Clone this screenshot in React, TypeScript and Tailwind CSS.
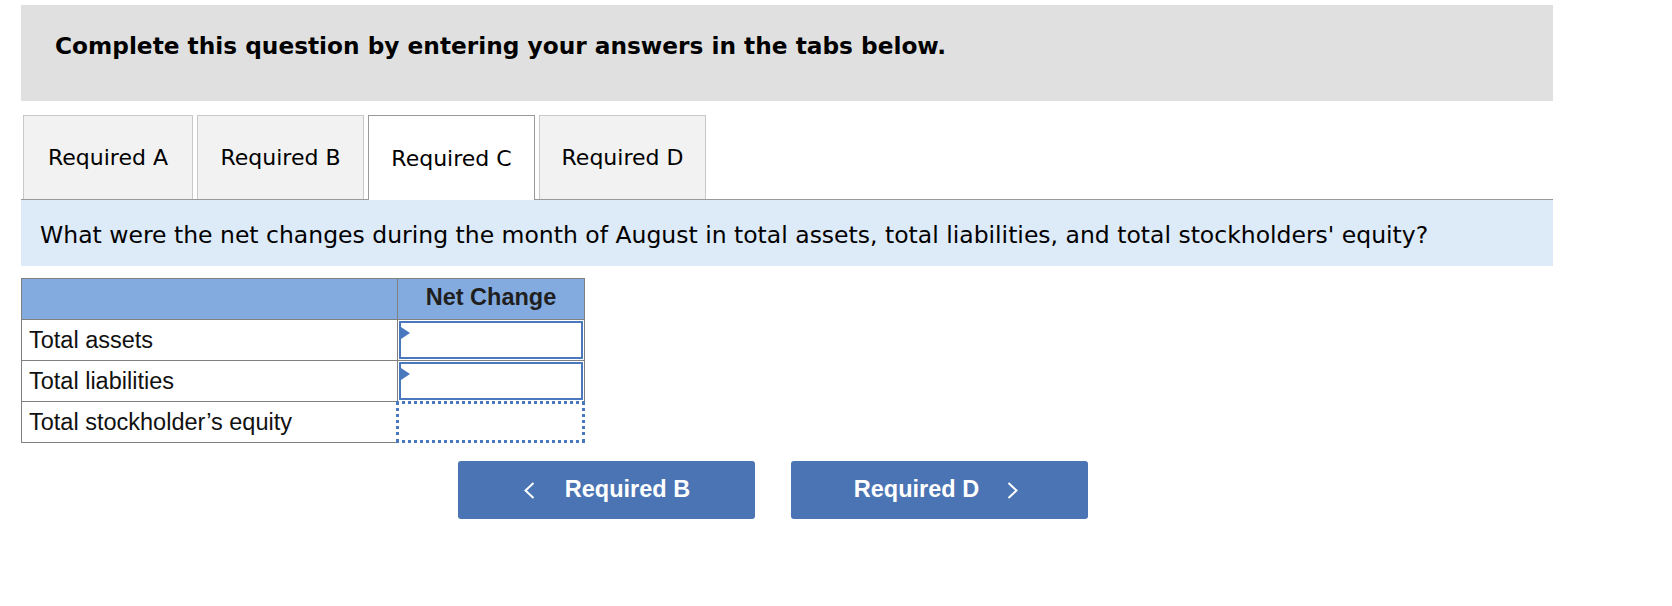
import React from 'react';

const tabs = ['Required A', 'Required B', 'Required C', 'Required D'];
const rows = ['Total assets', 'Total liabilities', 'Total stockholder’s equity'];

function Flag() {
  return (
    <svg className="absolute left-0 top-[4px]" width="9" height="12" viewBox="0 0 9 12">
      <polygon points="0,0 9,6 0,12" fill="#4a78bf" />
    </svg>
  );
}

export default function App() {
  const active = 2;
  return (
    <div className="w-[1672px] h-[606px] bg-white pl-[21px] pt-[5px] font-['DejaVu_Sans',Verdana,sans-serif] text-black">
      <div className="w-[1532px]">
        <div className="h-[96px] bg-[#e0e0e0] flex items-center pl-[34px] pb-[14px]">
          <h1 className="text-[23.25px] font-bold">Complete this question by entering your answers in the tabs below.</h1>
        </div>

        <div className="mt-[14px] flex gap-[4px] pl-[2px] border-b border-[#999]">
          {tabs.map((t, i) => (
            <div
              key={t}
              className={
                (i === 0 ? 'w-[170px] ' : 'w-[167px] ') +
                (i === active
                  ? 'h-[85px] -mb-px bg-white border border-b-0 border-[#999] flex items-center justify-center text-[22px]'
                  : 'h-[84px] bg-[#f2f2f2] border border-b-0 border-[#c8c8c8] flex items-center justify-center text-[22px]')
              }
            >
              {t}
            </div>
          ))}
        </div>

        <div className="h-[66px] bg-[#ddeaf7] flex items-center pl-[19px] pt-[5px]">
          <p className="text-[23.5px]">
            What were the net changes during the month of August in total assets, total liabilities, and total stockholders' equity?
          </p>
        </div>

        <table className="mt-[12px] border-collapse font-['Liberation_Sans',Arial,sans-serif] text-[23.5px]">
          <thead>
            <tr className="h-[41px] bg-[#84abdf]">
              <th className="w-[376px] border border-[#808080]" />
              <th className="w-[187px] border border-[#808080] font-bold text-[#1f1f1f] pb-[2px]">Net Change</th>
            </tr>
          </thead>
          <tbody>
            {rows.map((r, i) => (
              <tr key={r} className="h-[41px]">
                <td className="border border-[#808080] pl-[7px] pt-[1px] text-[#111]">{r}</td>
                <td className="relative border border-[#808080] p-0">
                  {i < 2 ? (
                    <div className="absolute inset-[1px] border-2 border-[#4a78bf] bg-white">
                      <Flag />
                    </div>
                  ) : (
                    <div className="absolute -left-[2px] -top-[1px] -right-[1px] -bottom-[1px] border-[3px] border-dotted border-[#4a78bf] bg-white" />
                  )}
                </td>
              </tr>
            ))}
          </tbody>
        </table>

        <div className="mt-[18px] flex gap-[36px] pl-[437px] font-['Liberation_Sans',Arial,sans-serif]">
          <button className="w-[297px] h-[58px] rounded-[3px] bg-[#4a74b4] text-white text-[23.5px] font-bold flex items-center justify-center gap-[30px]">
            <svg width="12" height="17" viewBox="0 0 12 17">
              <polyline points="10.5,1 2.5,8.5 10.5,16" fill="none" stroke="white" strokeWidth="2" />
            </svg>
            <span>Required B</span>
          </button>
          <button className="w-[297px] h-[58px] rounded-[3px] bg-[#4a74b4] text-white text-[23.5px] font-bold flex items-center justify-center gap-[28px] pr-[6px]">
            <span>Required D</span>
            <svg width="12" height="17" viewBox="0 0 12 17">
              <polyline points="1.5,1 9.5,8.5 1.5,16" fill="none" stroke="white" strokeWidth="2" />
            </svg>
          </button>
        </div>
      </div>
    </div>
  );
}
